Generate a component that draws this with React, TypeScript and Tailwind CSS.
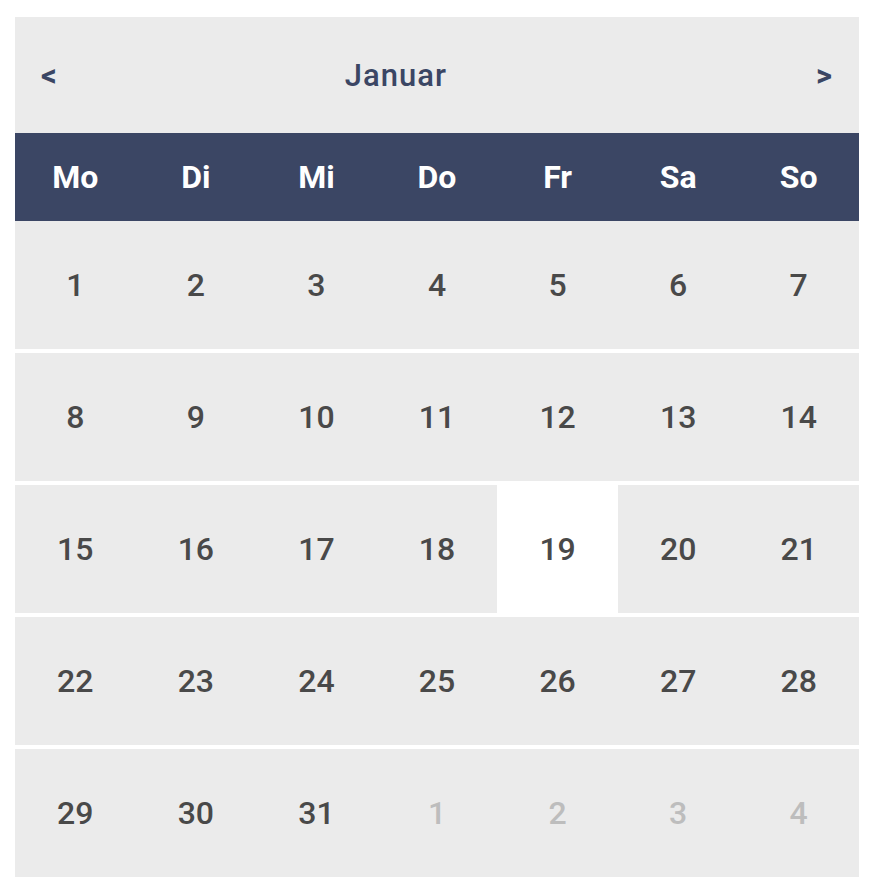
import React from "react";

const days = ["Mo", "Di", "Mi", "Do", "Fr", "Sa", "So"];

type Cell = { n: number; muted?: boolean; today?: boolean };

const weeks: Cell[][] = [
  [1, 2, 3, 4, 5, 6, 7].map((n) => ({ n })),
  [8, 9, 10, 11, 12, 13, 14].map((n) => ({ n })),
  [15, 16, 17, 18, 19, 20, 21].map((n) => ({ n, today: n === 19 })),
  [22, 23, 24, 25, 26, 27, 28].map((n) => ({ n })),
  [
    { n: 29 },
    { n: 30 },
    { n: 31 },
    { n: 1, muted: true },
    { n: 2, muted: true },
    { n: 3, muted: true },
    { n: 4, muted: true },
  ],
];

export default function App() {
  return (
    <div
      className="min-h-[894px] w-[878px] bg-white pt-[17px] pl-[15px]"
      style={{ fontFamily: "Roboto, 'Liberation Sans', sans-serif" }}
    >
      <div className="flex w-[844px] flex-col gap-[4px]">
        <div className="flex flex-col">
          <div className="flex h-[116px] items-center bg-[#ebebeb] pl-[26px] pr-[27px] text-[#3b4664]">
            <span className="text-[31px] font-bold leading-none">&lt;</span>
            <div className="flex-1 pr-[81px] text-center text-[31px] font-medium leading-none tracking-[1px]">
              Januar
            </div>
            <span className="text-[31px] font-bold leading-none">&gt;</span>
          </div>
          <div className="grid h-[88px] grid-cols-7 items-center bg-[#3b4664] text-white">
            {days.map((d) => (
              <div key={d} className="text-center text-[32px] font-bold leading-none">
                {d}
              </div>
            ))}
          </div>
          <Week cells={weeks[0]} />
        </div>
        {weeks.slice(1).map((w, i) => (
          <Week key={i} cells={w} />
        ))}
      </div>
    </div>
  );
}

function Week({ cells }: { cells: Cell[] }) {
  return (
    <div className="grid h-[128px] grid-cols-7 bg-[#ebebeb]">
      {cells.map((c, i) => (
        <div
          key={i}
          className={
            "flex items-center justify-center text-[32px] font-medium leading-none " +
            (c.today ? "bg-white " : "") +
            (c.muted ? "text-[#bdbdbd]" : "text-[#494949]")
          }
        >
          {c.n}
        </div>
      ))}
    </div>
  );
}
